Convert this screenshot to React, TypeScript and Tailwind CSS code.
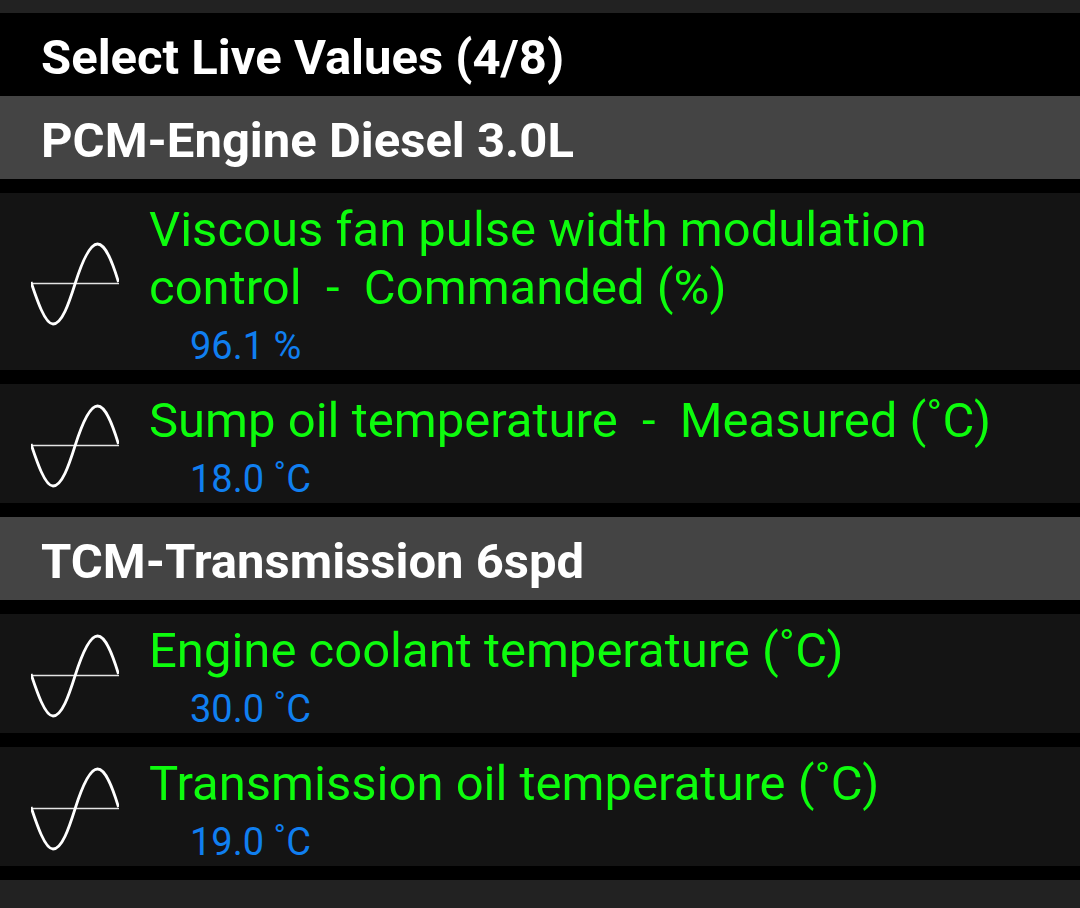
import React from 'react';

interface LiveValue {
  label: string;
  value: string;
}

interface Module {
  name: string;
  values: LiveValue[];
}

const MAX_SELECTED = 8;

const modules: Module[] = [
  {
    name: 'PCM-Engine Diesel 3.0L',
    values: [
      { label: 'Viscous fan pulse width modulation control  -  Commanded (%)', value: '96.1 %' },
      { label: 'Sump oil temperature  -  Measured (˚C)', value: '18.0 ˚C' }
    ]
  },
  {
    name: 'TCM-Transmission 6spd',
    values: [
      { label: 'Engine coolant temperature (˚C)', value: '30.0 ˚C' },
      { label: 'Transmission oil temperature (˚C)', value: '19.0 ˚C' }
    ]
  }
];

function SineIcon() {
  return (
    <svg className="mb-0.5 h-[84px] w-[88px] shrink-0" viewBox="0 0 88 84" fill="none" stroke="#fff" aria-hidden="true">
      <path d="M0 41.5H88" stroke="#e4e4e4" strokeWidth="1.6" />
      <path
        d="M0 40C6 58 14 82 22 82C31 82 38 61 44 42C50 23 58 2 66.5 2C75 2 82 22 87.5 40"
        strokeWidth="2.8"
      />
    </svg>
  );
}

function LiveValueRow({ label, value }: LiveValue) {
  return (
    <li>
      <button
        type="button"
        aria-pressed="true"
        className="flex w-full items-center gap-[30px] bg-[#141414] pt-2 pr-4 pb-0.5 pl-[31px] text-left"
      >
        <SineIcon />
        <span className="flex min-w-0 flex-1 flex-col gap-[7px]">
          <span className="text-[49px] leading-[58px] whitespace-pre-wrap text-[#0dfc0d]">{label}</span>
          <span className="pl-[41px] text-[38px] leading-[44px] text-[#107ff0]">{value}</span>
        </span>
      </button>
    </li>
  );
}

export default function App() {
  const selected = modules.reduce((count, module) => count + module.values.length, 0);

  return (
    <div className="min-h-screen bg-[#222] pt-[13px] font-['Roboto',sans-serif]">
      <main className="bg-black">
        <h1 className="px-[41px] pt-4 pb-[9px] text-[49px] leading-[58px] font-bold text-white">
          Select Live Values ({selected}/{MAX_SELECTED})
        </h1>
        {modules.map((module) => (
          <section key={module.name}>
            <h2 className="bg-[#444] px-[41px] pt-4 pb-[9px] text-[49px] leading-[58px] font-bold text-white">
              {module.name}
            </h2>
            <ul className="flex flex-col gap-3.5 py-3.5">
              {module.values.map((item) => (
                <LiveValueRow key={item.label} {...item} />
              ))}
            </ul>
          </section>
        ))}
      </main>
    </div>
  );
}
